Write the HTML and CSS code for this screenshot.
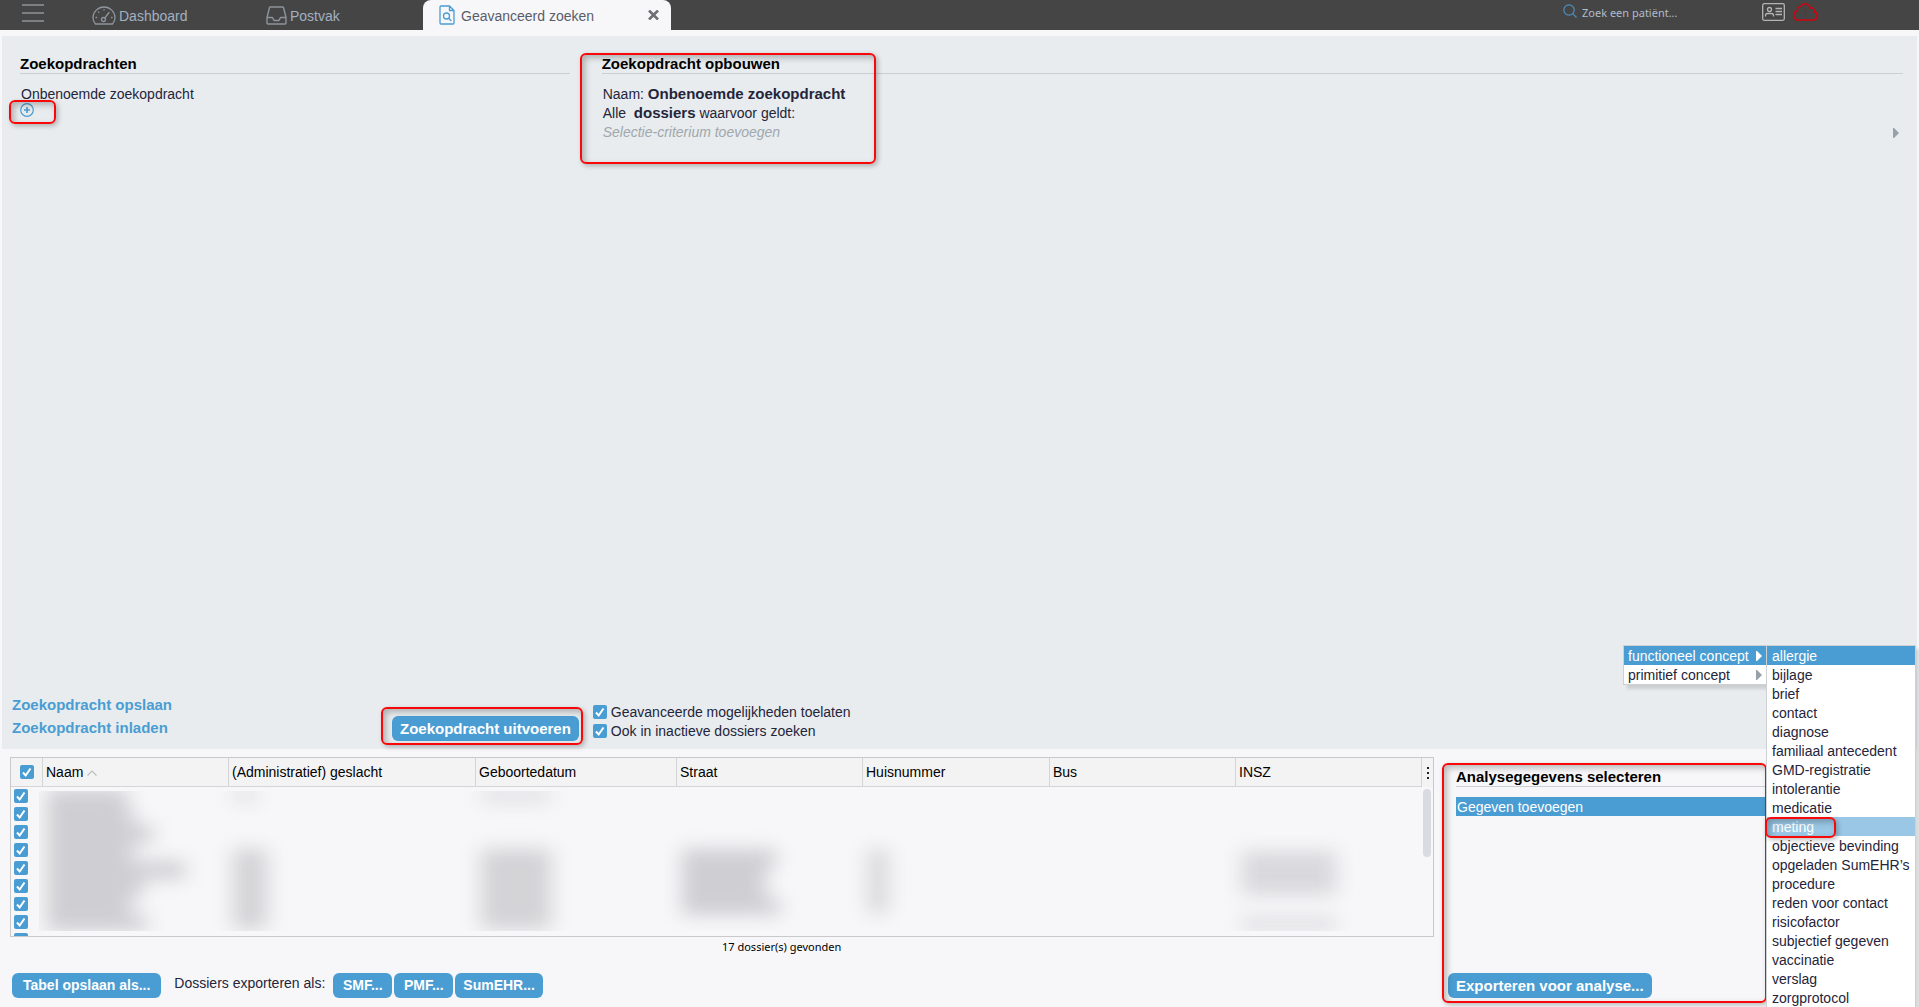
FILE: index.html
```html
<!DOCTYPE html>
<html lang="nl">
<head>
<meta charset="utf-8">
<title>Geavanceerd zoeken</title>
<link rel="stylesheet" href="styles.css">
</head>
<body>
<header class="topbar">
  <button class="menu-button" type="button" aria-label="Menu">
    <svg width="22" height="18" viewBox="0 0 22 18" stroke="#8d949b" stroke-width="1.4"><path d="M0 1h22M0 9h22M0 17h22"/></svg>
  </button>
  <nav class="tabs">
    <a class="tab tab-dashboard" href="#">
      <svg width="24" height="19" viewBox="0 0 24 19" fill="none" stroke="#8d949b" stroke-width="1.3" stroke-linecap="round"><path d="M3.5 18C2 16.300 1 14.200 1 11.800 1 5.800 6 1 12 1s11 4.800 11 10.800c0 2.400-1 4.500-2.500 6.200z"/><circle cx="11.500" cy="13.500" r="2"/><path d="M12.800 12L17 6.500M12 3.600v.6M6.500 6l.4.4M4 11.500h.6M19.500 11.500h.6"/></svg>
      <span>Dashboard</span>
    </a>
    <a class="tab tab-inbox" href="#">
      <svg width="21" height="19" viewBox="0 0 21 19" fill="none" stroke="#8d949b" stroke-width="1.4" stroke-linejoin="round"><path d="M1 11.500L3.500 1.500Q3.700 1 4.300 1h12.400q.6 0 .8.500L20 11.500V17q0 1-1 1H2q-1 0-1-1zM1 11.500h5.500l1.500 3h5l1.500-3H20"/></svg>
      <span>Postvak</span>
    </a>
    <div class="tab tab-active">
      <svg width="16" height="20" viewBox="0 0 16 20" fill="none" stroke="#4a9dd2" stroke-width="1.300" stroke-linejoin="round"><path d="M10.500 1H2Q1 1 1 2v16q0 1 1 1h12q1 0 1-1V5.500zM10.500 1v4.500H15"/><circle cx="7.500" cy="11" r="3"/><path d="M9.700 13.300L12.300 16"/></svg>
      <a class="tab-label" href="#">Geavanceerd zoeken</a>
      <button class="tab-close" type="button" aria-label="Sluiten">
        <svg width="11" height="10" viewBox="0 0 11 10" stroke="#6f6f73" stroke-width="2.600"><path d="M1 .5l9 9M10 .5l-9 9"/></svg>
      </button>
    </div>
  </nav>
  <label class="patient-search">
    <svg width="14" height="14" viewBox="0 0 14 14" fill="none" stroke="#4a90c0" stroke-width="1.200"><circle cx="6" cy="6" r="5.200"/><path d="M9.700 9.700L13.500 13.500"/></svg>
    <input type="text" placeholder="Zoek een patiënt..." aria-label="Zoek een patiënt">
  </label>
  <div class="status">
    <svg width="23" height="18" viewBox="0 0 23 18" fill="none" stroke="#b4b4b4" stroke-width="1.300"><rect x=".7" y=".7" width="21.600" height="16.600" rx="1.500"/><circle cx="7.500" cy="6.500" r="2"/><path d="M3.500 13.500v-1q0-2 2-2h4q2 0 2 2v1M13.500 5.500h6.500M13.500 8.500h6.500M13.500 11.500h6.500"/></svg>
    <svg width="25" height="18" viewBox="0 0 25 18" fill="none" stroke="#d4000c" stroke-width="1.400"><path d="M5 17C2.500 17 .8 15 .8 12.500.8 10 2.500 8.300 4.500 8 4 5.500 5.500 3.500 7.500 3.600 8.500 1.800 10.500.8 12.500 1c2.500.2 4.300 1.500 4.700 4 2.300-.8 4.500 1 4 3.800 2 .5 3 2.200 2.900 4.200-.1 2.300-1.800 4-4 4z"/><path d="M12.500 5.500v6.500M12.500 13.200v1.300" stroke-width="1.100"/></svg>
  </div>
</header>

<main class="workspace">
  <div class="query-columns">
    <section class="query-list">
      <h2 class="section-title">Zoekopdrachten</h2>
      <p class="query-text">Onbenoemde zoekopdracht</p>
      <div class="add-row">
        <button class="add-button" type="button" aria-label="Zoekopdracht toevoegen">
          <svg width="14" height="14" viewBox="0 0 14 14" fill="none" stroke="#4a9dd2"><circle cx="7" cy="7" r="6.300" stroke-width="1.200"/><path d="M7 4v6M4 7h6" stroke-width="1.600"/></svg>
        </button>
        <span class="mark mark-add"></span>
      </div>
    </section>
    <section class="query-builder">
      <h2 class="section-title">Zoekopdracht opbouwen</h2>
      <p class="query-text">Naam: <strong>Onbenoemde zoekopdracht</strong></p>
      <p class="query-text">Alle&nbsp; <strong>dossiers</strong>&nbsp;waarvoor geldt:</p>
      <p class="query-text criterion"><em>Selectie-criterium toevoegen</em>
        <svg width="6" height="10" viewBox="0 0 6 10" fill="#98a1a9"><path d="M0 0h1l5 5-5 5H0z"/></svg></p>
      <span class="mark mark-builder"></span>
    </section>
  </div>
  <div class="query-actions">
    <div class="file-links">
      <a href="#">Zoekopdracht opslaan</a>
      <a href="#">Zoekopdracht inladen</a>
    </div>
    <div class="run-box">
      <button class="button button-run" type="button">Zoekopdracht uitvoeren</button>
      <span class="mark mark-run"></span>
    </div>
    <div class="options">
      <label><input type="checkbox" checked>Geavanceerde mogelijkheden toelaten</label>
      <label><input type="checkbox" checked>Ook in inactieve dossiers zoeken</label>
    </div>
  </div>
</main>

<div class="results">
  <section class="result-main">
    <div class="table-frame">
      <table class="result-table">
        <colgroup><col class="c-select"><col class="c-normal"><col class="c-sex"><col class="c-birth"><col class="c-normal"><col class="c-number"><col class="c-normal"><col class="c-normal"><col class="c-menu"></colgroup>
        <thead>
          <tr>
            <th><input type="checkbox" checked aria-label="Alles selecteren"></th>
            <th>Naam <svg width="10" height="6" viewBox="0 0 10 6" fill="none" stroke="#bdbdbd" stroke-width="1.200"><path d="M.5 5.500L5 1l4.500 4.500"/></svg></th>
            <th>(Administratief) geslacht</th><th>Geboortedatum</th><th>Straat</th><th>Huisnummer</th><th>Bus</th><th>INSZ</th>
            <th class="kebab"><svg width="2" height="12" viewBox="0 0 2 12" fill="#222"><path d="M0 0h2v2H0zM0 5h2v2H0zM0 10h2v2H0z"/></svg></th>
          </tr>
        </thead>
        <tbody>
          <tr><td><input type="checkbox" checked aria-label="Dossier 1"></td><td colspan="8"></td></tr>
          <tr><td><input type="checkbox" checked aria-label="Dossier 2"></td><td colspan="8"></td></tr>
          <tr><td><input type="checkbox" checked aria-label="Dossier 3"></td><td colspan="8"></td></tr>
          <tr><td><input type="checkbox" checked aria-label="Dossier 4"></td><td colspan="8"></td></tr>
          <tr><td><input type="checkbox" checked aria-label="Dossier 5"></td><td colspan="8"></td></tr>
          <tr><td><input type="checkbox" checked aria-label="Dossier 6"></td><td colspan="8"></td></tr>
          <tr><td><input type="checkbox" checked aria-label="Dossier 7"></td><td colspan="8"></td></tr>
          <tr><td><input type="checkbox" checked aria-label="Dossier 8"></td><td colspan="8"></td></tr>
          <tr><td><input type="checkbox" checked aria-label="Dossier 9"></td><td colspan="8"></td></tr>
        </tbody>
      </table>
      <!-- Patient data is blurred out for privacy -->
      <svg class="privacy-blur" width="1340" height="140" viewBox="0 0 1340 140">
        <defs><filter id="soft" x="-10%" y="-30%" width="120%" height="160%" color-interpolation-filters="sRGB"><feGaussianBlur stdDeviation="10 9"/></filter></defs>
        <g filter="url(#soft)" fill="#cfcfd3">
          <path d="M8-2H88V16H8zM8 16H94V34H8zM8 34H114V52H8zM8 52H94V70H8zM8 70H146V88H8zM8 88H104V106H8zM8 106H92V124H8zM8 124H108V140H8z"/>
          <path opacity=".5" d="M194-4h24v16h-24zM442-4h70v16h-70z"/>
          <path opacity=".9" d="M194 58h34v80h-34zM442 58h70v80h-70z"/>
          <path d="M643 58h94v18H727v32h14v16h-98z"/>
          <path opacity=".8" d="M829 58h20v64h-20z"/>
          <path opacity=".75" d="M1203 60h94v44h-94z"/>
          <path opacity=".6" d="M1203 126h94v14h-94z"/>
        </g>
      </svg>
      <div class="scroll-thumb"></div>
    </div>
    <p class="result-count">17 dossier(s) gevonden</p>
    <div class="export-row">
      <button class="button button-save" type="button">Tabel opslaan als...</button>
      <span class="export-label">Dossiers exporteren als:</span>
      <div class="export-buttons">
        <button class="button" type="button">SMF...</button>
        <button class="button" type="button">PMF...</button>
        <button class="button" type="button">SumEHR...</button>
      </div>
    </div>
  </section>
  <aside class="analysis">
    <h2 class="section-title">Analysegegevens selecteren</h2>
    <button class="add-field" type="button">Gegeven toevoegen</button>
    <button class="button button-analysis" type="button">Exporteren voor analyse...</button>
    <span class="mark mark-analysis"></span>
  </aside>
</div>

<div class="popup">
  <ul class="menu menu-root">
    <li class="selected">functioneel concept <svg width="6" height="10" viewBox="0 0 6 10" fill="#fff"><path d="M0 0h1l5 5-5 5H0z"/></svg></li>
    <li>primitief concept <svg width="6" height="10" viewBox="0 0 6 10" fill="#98a1a9"><path d="M0 0h1l5 5-5 5H0z"/></svg></li>
  </ul>
  <ul class="menu menu-sub">
    <li class="selected">allergie</li>
    <li>bijlage</li>
    <li>brief</li>
    <li>contact</li>
    <li>diagnose</li>
    <li>familiaal antecedent</li>
    <li>GMD-registratie</li>
    <li>intolerantie</li>
    <li>medicatie</li>
    <li class="hovered">meting<span class="mark mark-item"></span></li>
    <li>objectieve bevinding</li>
    <li>opgeladen SumEHR’s</li>
    <li>procedure</li>
    <li>reden voor contact</li>
    <li>risicofactor</li>
    <li>subjectief gegeven</li>
    <li>vaccinatie</li>
    <li>verslag</li>
    <li>zorgprotocol</li>
  </ul>
</div>
</body>
</html>
```
FILE: styles.css
```css
* { box-sizing: border-box; }

body {
  margin: 0;
  height: 100vh;
  display: flex;
  flex-direction: column;
  overflow: hidden;
  position: relative;
  background: #f7f7f9;
  color: #24243a;
  font: 14px/19px "Liberation Sans", Arial, sans-serif;
}

h2, p, ul { margin: 0; padding: 0; }
button { font: inherit; border: 0; padding: 0; background: none; }
svg { display: block; flex: none; }
a { text-decoration: none; }

input[type="checkbox"] {
  appearance: none;
  display: block;
  flex: none;
  width: 14px;
  height: 14px;
  margin: 0;
  border-radius: 2px;
  background: #4a9dd2 url("data:image/svg+xml,%3Csvg xmlns='http://www.w3.org/2000/svg' viewBox='0 0 14 14'%3E%3Cpath d='M3 7.500L5.700 10.500 10.500 3.500' fill='none' stroke='white' stroke-width='2'/%3E%3C/svg%3E");
}

/* Top bar */
.topbar {
  display: flex;
  flex: none;
  height: 30px;
  background: #454545;
}
.menu-button { width: 22px; margin-left: 22px; padding-top: 4px; align-self: flex-start; }
.tabs { display: flex; flex: 1; margin-left: 48px; }
.tab { display: flex; align-items: center; color: #a3b0c0; }
.tab span { padding-top: 2px; }
.tab-dashboard { gap: 3px; width: 174px; }
.tab-inbox { gap: 3px; width: 157px; }
.tab-active {
  width: 248px;
  padding: 0 12px 0 16px;
  border-radius: 8px 8px 0 0;
  background: #f7f7f9;
}
.tab-label { flex: 1; margin-left: 6px; padding-top: 2px; color: #5a5c6a; }
.patient-search { display: flex; gap: 5px; width: 199px; padding-top: 4px; }
.patient-search input {
  width: 140px;
  height: 17px;
  padding: 0;
  border: 0;
  outline: 0;
  background: none;
  font: 11px/17px "Noto Sans", sans-serif;
}
.patient-search input::placeholder { color: #b0bccb; opacity: 1; }
.status { display: flex; gap: 8px; width: 157px; padding-top: 3px; }

/* Search definition */
.workspace {
  flex: 1;
  display: flex;
  flex-direction: column;
  justify-content: space-between;
  margin: 6px 2px 0;
  background: #e8ecee;
}
.query-columns { display: flex; gap: 32px; padding: 18px 14px 0 18px; }
.query-list { flex: 550 1 0; }
.query-builder { flex: 1302 1 0; position: relative; }
.section-title {
  height: 20px;
  border-bottom: 1px solid #cbcfd2;
  color: #000;
  font-size: 15px;
  line-height: 20px;
  font-weight: bold;
}
.query-list .section-title, .query-builder .section-title { margin-bottom: 11px; }
.query-text { padding-left: 1px; }
.query-text strong { font-size: 15px; line-height: 1; }
.criterion { display: flex; justify-content: space-between; align-items: center; padding-right: 4px; color: #a0a7ad; }
.add-row { position: relative; margin-top: -1px; }
.add-button { display: block; }

.query-actions { display: flex; padding: 0 10px 8px; }
.file-links { width: 380px; display: flex; flex-direction: column; padding-bottom: 2px; }
.file-links a { color: #4a9dd2; font-size: 15px; font-weight: bold; line-height: 23px; }
.run-box { position: relative; align-self: flex-end; }
.options { display: flex; flex-direction: column; margin-left: 14px; padding-top: 10px; }
.options label { display: flex; align-items: center; gap: 4px; height: 19px; }
.options input { margin-bottom: 2px; }

.button {
  height: 25px;
  min-width: 59px;
  padding: 0 8px;
  border-radius: 6px;
  background: #4a9dd2;
  color: #fff;
  font-weight: bold;
  line-height: 25px;
  white-space: nowrap;
}
.button-run, .button-analysis { font-size: 15px; }
.button-save { padding: 0 11px; }

/* Results */
.results { flex: none; display: flex; gap: 22px; padding: 8px 14px 0 10px; }
.result-main { flex: 1; min-width: 0; }
.table-frame {
  position: relative;
  height: 180px;
  overflow: hidden;
  border: 1px solid #c9c9cc;
}
.result-table { width: 100%; table-layout: fixed; border-collapse: separate; border-spacing: 0; }
.c-select { width: 32px; }
.c-normal { width: 186px; }
.c-number { width: 187px; }
.c-sex { width: 247px; }
.c-birth { width: 201px; }
.c-menu { width: 12px; }
.result-table th {
  height: 29px;
  padding: 1px 3px 0;
  border-right: 1px solid #d5d5d8;
  border-bottom: 1px solid #d5d5d8;
  background: #f3f3f3;
  color: #000;
  font-weight: normal;
  text-align: left;
  white-space: nowrap;
}
.result-table th:first-child { padding: 0 0 0 9px; }
.result-table th svg { display: inline-block; vertical-align: 1px; }
.result-table .kebab { padding: 0 5px; border: 0; line-height: 0; }
.result-table td { height: 18px; padding: 2px 3px; }
.privacy-blur { position: absolute; left: 28px; top: 33px; }
.scroll-thumb {
  position: absolute;
  right: 2px;
  top: 31px;
  width: 8px;
  height: 68px;
  border-radius: 4px;
  background: #dadae2;
}
.result-count { padding-left: 50%; color: #000; font: 11px/20px "Noto Sans", sans-serif; }
.export-row { display: flex; margin: 16px 0 9px 2px; }
.export-label { margin: 1px 8px 0 13px; }
.export-buttons { display: flex; gap: 2px; }

.analysis { position: relative; display: flex; flex-direction: column; width: 449px; padding-top: 10px; }
.add-field {
  height: 19px;
  margin-top: 10px;
  padding: 1px 0 0 1px;
  background: #4a9dd2;
  color: #fff;
  line-height: 18px;
  text-align: left;
}
.button-analysis { align-self: flex-start; margin: auto 0 9px -8px; }

/* Context menu over the page */
.popup { position: absolute; right: 3px; top: 645px; display: flex; align-items: flex-start; }
.menu {
  list-style: none;
  border: 1px solid #cdd1d4;
  background: #fff;
  box-shadow: 4px 4px 3px rgba(0, 0, 0, .12);
}
.menu li { display: flex; justify-content: space-between; align-items: center; height: 19px; padding: 1px 4px 0; white-space: nowrap; }
.menu-root { width: 143px; border-right: 0; }
.menu-sub { width: 150px; position: relative; }
.menu-sub li { padding-left: 5px; position: relative; }
.menu .selected { background: #4a9dd2; color: #fff; }
.menu .hovered { background: #9ac7e5; color: #fff; }

/* Red highlight frames over the parts being explained */
.mark {
  position: absolute;
  border: 2px solid #f80808;
  border-radius: 6px;
  box-shadow: 2px 2px 5px rgba(0, 0, 0, .25), inset 3px 3px 6px rgba(0, 0, 0, .25);
  pointer-events: none;
}
.mark-add { left: -11px; top: -3px; width: 47px; height: 24px; }
.mark-builder { left: -22px; top: -1px; width: 296px; height: 111px; }
.mark-run { left: -11px; right: -4px; top: -9px; bottom: -4px; }
.mark-analysis { left: -14px; top: 6px; width: 325px; bottom: 4px; }
.mark-item { left: -2px; top: 0; width: 71px; height: 21px; }
```
